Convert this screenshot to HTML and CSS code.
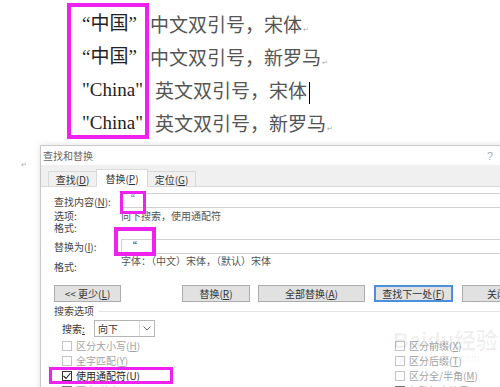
FILE: index.html
```html
<!DOCTYPE html>
<html lang="zh-CN">
<head>
    <meta charset="UTF-8">
    <title>查找和替换</title>
    <link rel="stylesheet" href="styles.css">
</head>
<body>
    <div class="doc">
        <div class="words">
            <div class="line">“中国”</div>
            <div class="line">“中国”</div>
            <div class="line">"China"</div>
            <div class="line">"China"</div>
        </div>
        <div class="descs">
            <div class="line">中文双引号，宋体<span class="mark">↵</span></div>
            <div class="line">中文双引号，新罗马<span class="mark">↵</span></div>
            <div class="line shift">英文双引号，宋体<span class="caret"></span></div>
            <div class="line shift">英文双引号，新罗马<span class="mark">↵</span></div>
        </div>
    </div>

    <div class="lower">
        <div class="gutter"><span class="mark">↵</span></div>
        <div class="dialog">
            <div class="titlebar">
                <span>查找和替换</span>
                <span class="help">?</span>
            </div>
            <div class="tabs">
                <div class="tab">查找(<u>D</u>)</div>
                <div class="tab active">替换(<u>P</u>)</div>
                <div class="tab">定位(<u>G</u>)</div>
            </div>

            <div class="panel">
                <div class="field first">
                    <div class="label">查找内容(<u>N</u>):</div>
                    <div class="input">“</div>
                </div>
                <div class="field">
                    <div class="label">选项:</div>
                    <div class="value">向下搜索，使用通配符</div>
                </div>
                <div class="field">
                    <div class="label">格式:</div>
                    <div class="value"></div>
                </div>
                <div class="field second">
                    <div class="label">替换为(<u>I</u>):</div>
                    <div class="input strong">“</div>
                </div>
                <div class="field">
                    <div class="label low">格式:</div>
                    <div class="value">字体：（中文）宋体，（默认）宋体</div>
                </div>
            </div>

            <div class="buttons">
                <div class="btn less">&lt;&lt; 更少(<u>L</u>)</div>
                <div class="btn replace">替换(<u>R</u>)</div>
                <div class="btn replace-all">全部替换(<u>A</u>)</div>
                <div class="btn find-next">查找下一处(<u>F</u>)</div>
                <div class="btn close">关闭</div>
            </div>

            <div class="options">
                <div class="legend"><span>搜索选项</span><span class="rule"></span></div>
                <div class="search-row">
                    <span class="search-label">搜索<u>:</u></span>
                    <div class="select">
                        <span class="select-text">向下</span>
                        <span class="select-arrow">
                            <svg width="8" height="5" viewBox="0 0 8 5"><polyline points="0.5,0.5 4,4 7.5,0.5" fill="none" stroke="#666" stroke-width="1"/></svg>
                        </span>
                    </div>
                </div>
                <div class="checks">
                    <div class="check disabled"><span class="box"></span>区分大小写(<u>H</u>)</div>
                    <div class="check disabled"><span class="box"></span>区分前缀(<u>X</u>)</div>
                    <div class="check disabled"><span class="box"></span>全字匹配(<u>Y</u>)</div>
                    <div class="check disabled"><span class="box"></span>区分后缀(<u>T</u>)</div>
                    <div class="check on">
                        <span class="box">
                            <svg width="8" height="8" viewBox="0 0 8 8"><polyline points="0.5,4 3,6.5 7.5,1" fill="none" stroke="#222" stroke-width="1.1"/></svg>
                        </span>使用通配符(<u>U</u>)
                    </div>
                    <div class="check disabled"><span class="box"></span>区分全/半角(<u>M</u>)</div>
                    <div class="check disabled"><span class="box dark"></span>同音(英文)(<u>K</u>)</div>
                    <div class="check disabled"><span class="box dark"></span>忽略标点符号(<u>S</u>)</div>
                </div>
            </div>

            <div class="watermark">
                <div class="wm-big">Baidu经验</div>
                <div class="wm-small">jingyan.baidu.com</div>
            </div>

            <div class="hl hl-find"></div>
            <div class="hl hl-replace"></div>
            <div class="hl hl-wild"></div>
        </div>
    </div>
</body>
</html>
```

FILE: styles.css
```css
body {
    margin: 0;
    width: 500px;
    height: 387px;
    overflow: hidden;
    background: #fff;
    font-family: "Noto Sans CJK SC", sans-serif;
}

/* document text above the dialog */
.doc {
    display: flex;
    align-items: flex-start;
    height: 145px;
    padding: 3px 0 0 67px;
    box-sizing: border-box;
}

.words {
    width: 82px;
    height: 136px;
    box-sizing: border-box;
    border: 4px solid #ef21ef;
    padding-left: 11px;
    font-family: "Liberation Serif", "Noto Sans CJK SC", serif;
    font-size: 19px;
    color: #222;
}

.line {
    height: 33px;
    line-height: 33px;
    white-space: nowrap;
}

.descs {
    padding: 4px 0 0 1px;
    font-size: 19px;
    color: #555;
}

.descs .shift {
    padding-left: 5px;
}

.mark {
    font-family: "DejaVu Sans", sans-serif;
    font-size: 7px;
    color: #aaa;
    margin-left: 1px;
}

.caret {
    display: inline-block;
    width: 1px;
    height: 22px;
    margin-left: 2px;
    background: #000;
    vertical-align: middle;
}

/* lower part */
.lower {
    display: flex;
}

.gutter {
    width: 40px;
    flex: none;
    padding: 10px 0 0 20px;
    box-sizing: border-box;
    line-height: 10px;
}

.dialog {
    position: relative;
    flex: none;
    width: 470px;
    height: 260px;
    border: 1px solid #c9c9c9;
    box-shadow: 0 0 6px rgba(0, 0, 0, 0.12);
    background: #fff;
    font-size: 10px;
    color: #444;
}

.titlebar {
    display: flex;
    align-items: center;
    height: 19px;
    padding-left: 2px;
    color: #666;
}

.help {
    margin-left: auto;
    margin-right: 18px;
    font-family: "Liberation Sans", sans-serif;
    font-size: 11px;
    color: #aaa;
}

.tabs {
    display: flex;
    align-items: flex-end;
    height: 22px;
    box-sizing: border-box;
    padding-left: 7px;
    background: #f0f0f0;
    border-bottom: 1px solid #d9d9d9;
}

.tab {
    width: 49px;
    height: 15px;
    box-sizing: border-box;
    border: 1px solid #d9d9d9;
    border-bottom: none;
    display: flex;
    align-items: center;
    justify-content: center;
    color: #333;
}

.tab + .tab {
    margin-left: -1px;
}

.tab.active {
    position: relative;
    width: 52px;
    height: 18px;
    margin-bottom: -1px;
    background: #fff;
    align-items: flex-start;
    padding-top: 1px;
}

/* find / replace fields */
.panel {
    padding-left: 13px;
}

.field {
    display: flex;
    line-height: 12px;
    height: 12px;
}

.field.first {
    margin-top: 6px;
    height: 15px;
}

.field.second {
    margin-top: 5px;
    height: 15px;
}

.field.first + .field {
    margin-top: 2px;
}

.label {
    width: 67px;
    flex: none;
    white-space: nowrap;
}

.field.first .label {
    padding-top: 3px;
}

.field.second .label {
    padding-top: 2px;
}

.label.low {
    padding-top: 6px;
}

.value {
    color: #555;
    white-space: nowrap;
}

.field.second + .field {
    margin-top: 1px;
    height: 18px;
}

.input {
    flex: 1;
    height: 15px;
    box-sizing: border-box;
    border: 1px solid #d0d0d0;
    border-right: none;
    padding-left: 3px;
    line-height: 9px;
    color: #666;
}

.input.strong {
    padding-left: 5px;
    line-height: 11px;
    color: #222;
}

/* button row */
.buttons {
    display: flex;
    margin-top: 12px;
    padding-left: 13px;
}

.btn {
    height: 17px;
    box-sizing: border-box;
    border: 1px solid #adadad;
    background: #e1e1e1;
    display: flex;
    align-items: center;
    justify-content: center;
    color: #333;
    flex: none;
    white-space: nowrap;
}

.btn.less {
    width: 67px;
}

.btn.replace {
    width: 68px;
    margin-left: 61px;
}

.btn.replace-all {
    width: 107px;
    margin-left: 8px;
}

.btn.find-next {
    width: 79px;
    margin-left: 9px;
    border: 2px solid #4a90dc;
}

.btn.close {
    width: 70px;
    margin-left: 9px;
}

/* search options */
.options {
    margin-top: 3px;
    padding-left: 13px;
}

.legend {
    display: flex;
    align-items: center;
    height: 12px;
    line-height: 12px;
}

.rule {
    flex: 1;
    margin-left: 5px;
    border-top: 1px solid #e3e3e3;
}

.search-row {
    display: flex;
    align-items: center;
    margin-top: 3px;
    padding-left: 8px;
    height: 17px;
}

.search-label {
    width: 32px;
    color: #333;
}

.select {
    display: flex;
    width: 61px;
    height: 17px;
    box-sizing: border-box;
    border: 1px solid #b5b5b5;
    background: #fff;
}

.select-text {
    flex: 1;
    padding-left: 3px;
    line-height: 15px;
    color: #333;
}

.select-arrow {
    width: 14px;
    border-left: 1px solid #dcdcdc;
    display: flex;
    align-items: center;
    justify-content: center;
}

.checks {
    display: grid;
    grid-template-columns: 333px 1fr;
    grid-auto-rows: 15px;
    margin-top: 1px;
    padding-left: 8px;
}

.check {
    display: flex;
    align-items: center;
    white-space: nowrap;
}

.box {
    width: 10px;
    height: 10px;
    box-sizing: border-box;
    border: 1px solid #c4c4c4;
    margin-right: 4px;
    display: flex;
    align-items: center;
    justify-content: center;
    background: #fff;
}

.check.disabled {
    color: #a3a3a3;
}

.check.on {
    color: #222;
}

.check.on .box {
    border-color: #333;
}

.box.dark {
    border-color: #777;
    border-top-width: 3px;
}

/* faint watermark over the dialog */
.watermark {
    position: absolute;
    left: 352px;
    top: 183px;
    color: rgba(0, 0, 0, 0.06);
    font-family: "Liberation Sans", "Noto Sans CJK SC", sans-serif;
    pointer-events: none;
}

.wm-big {
    font-size: 22px;
    font-weight: bold;
    line-height: 24px;
}

.wm-small {
    font-size: 10px;
    line-height: 12px;
    margin-left: 6px;
}

/* magenta annotation boxes */
.hl {
    position: absolute;
    box-sizing: border-box;
    border: 3px solid #ef21ef;
}

.hl-find {
    left: 79px;
    top: 45px;
    width: 26px;
    height: 23px;
}

.hl-replace {
    left: 73px;
    top: 81px;
    width: 42px;
    height: 29px;
    border-width: 4px;
}

.hl-wild {
    left: 8px;
    top: 221px;
    width: 124px;
    height: 17px;
}
```
